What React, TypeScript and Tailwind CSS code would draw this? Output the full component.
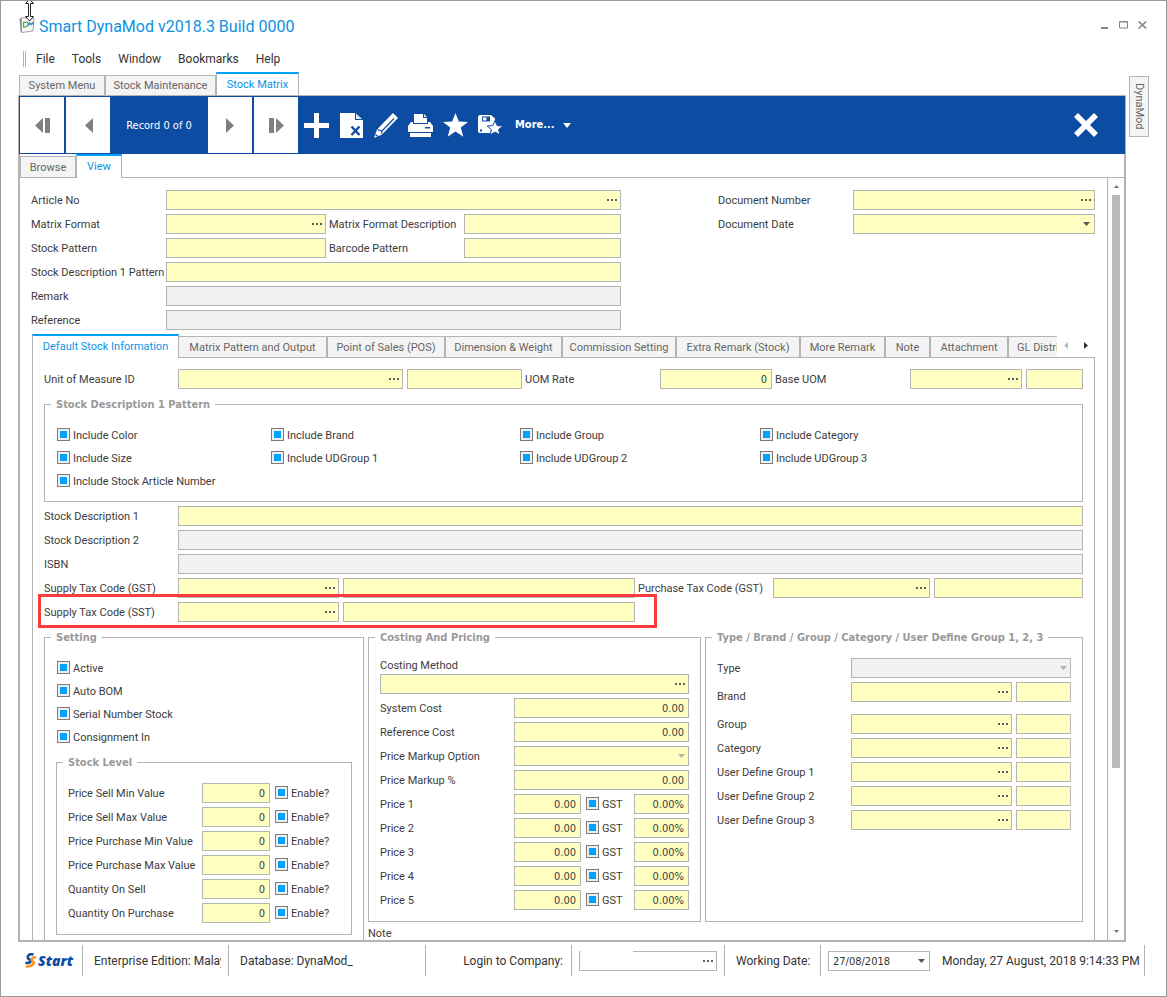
import React, { useId, useState } from 'react';

const LINE = 'border-[#b4b4b4]';
const YELLOW = 'bg-[#ffffc1]';
const GRAY = 'bg-[#f1f1f1]';

function Dots() {
  return (
    <svg width="10" height="2" viewBox="0 0 10 2" fill="#5f5f5f" aria-hidden="true">
      <rect width="2" height="2" />
      <rect x="4" width="2" height="2" />
      <rect x="8" width="2" height="2" />
    </svg>
  );
}

function Caret({ muted = false }: { muted?: boolean }) {
  return (
    <svg width="7" height="4" viewBox="0 0 7 4" fill={muted ? '#b4b4a4' : '#555'} aria-hidden="true">
      <path d="M0 0h7L3.5 4z" />
    </svg>
  );
}

type BoxProps = {
  id?: string;
  label?: string;
  kind?: 'text' | 'lookup' | 'date';
  value?: string;
  fill?: string;
  right?: boolean;
  className?: string;
};

function Box({ id, label, kind = 'text', value = '', fill = YELLOW, right = false, className = '' }: BoxProps) {
  const [text, setText] = useState(value);
  return (
    <div className={`flex h-5 min-w-0 border ${LINE} ${fill} ${className}`}>
      <input
        id={id}
        aria-label={label}
        value={text}
        onChange={(e) => setText(e.target.value)}
        className={`w-full min-w-0 flex-1 bg-transparent px-1 pt-[2px] font-['DejaVu_Sans_Condensed','Noto_Sans',sans-serif] outline-none ${right ? 'text-right' : ''}`}
      />
      {kind !== 'text' && (
        <button type="button" aria-label="Open" className="flex w-4 shrink-0 items-center justify-center">
          {kind === 'lookup' ? <Dots /> : <Caret />}
        </button>
      )}
    </div>
  );
}

function Drop({ id, fill, className = '' }: { id: string; fill: string; className?: string }) {
  return (
    <div className={`relative h-5 min-w-0 border ${LINE} ${fill} ${className}`}>
      <select id={id} className="h-full w-full appearance-none bg-transparent px-1 outline-none">
        <option value=""></option>
      </select>
      <span className="pointer-events-none absolute inset-y-0 right-[3px] flex items-center">
        <Caret muted />
      </span>
    </div>
  );
}

function Check({ label, className = '' }: { label: string; className?: string }) {
  return (
    <label className={`flex items-center gap-[3px] whitespace-nowrap ${className}`}>
      <input
        type="checkbox"
        defaultChecked
        className="size-[13px] shrink-0 appearance-none border border-[#7a7a7a] bg-white shadow-[inset_0_0_0_2px_#f0f0f0] checked:bg-[#00a2ff]"
      />
      <span className="pt-[2px]">{label}</span>
    </label>
  );
}

function Label({ htmlFor, children, className = '' }: { htmlFor: string; children: React.ReactNode; className?: string }) {
  return (
    <label htmlFor={htmlFor} className={`pt-[2px] whitespace-nowrap ${className}`}>
      {children}
    </label>
  );
}

function Group({ title, className = '', children }: { title: string; className?: string; children: React.ReactNode }) {
  return (
    <fieldset className={`min-w-0 border ${LINE} ${className}`}>
      <legend className="ml-[6px] px-[5px] font-['DejaVu_Sans_Condensed','Noto_Sans',sans-serif] text-[11px] leading-[15px] font-bold text-[#999]">{title}</legend>
      {children}
    </fieldset>
  );
}

function WideRow({ label, fill }: { label: string; fill: string }) {
  const id = useId();
  return (
    <div className="grid grid-cols-[134px_minmax(0,1fr)] items-center">
      <Label htmlFor={id}>{label}</Label>
      <Box id={id} fill={fill} />
    </div>
  );
}

function HeaderFields() {
  const id = useId();
  return (
    <div className="grid grid-cols-[135px_minmax(0,455fr)_97px_135px_minmax(0,242fr)] items-center gap-y-1">
      <Label htmlFor={id + 'article'}>Article No</Label>
      <Box id={id + 'article'} kind="lookup" />
      <Label htmlFor={id + 'docno'} className="col-start-4">Document Number</Label>
      <Box id={id + 'docno'} kind="lookup" />

      <Label htmlFor={id + 'format'}>Matrix Format</Label>
      <div className="grid grid-cols-[minmax(0,160fr)_138px_minmax(0,157fr)] items-center">
        <Box id={id + 'format'} kind="lookup" />
        <Label htmlFor={id + 'formatdesc'} className="pl-[3px]">Matrix Format Description</Label>
        <Box id={id + 'formatdesc'} />
      </div>
      <Label htmlFor={id + 'docdate'} className="col-start-4">Document Date</Label>
      <Box id={id + 'docdate'} kind="date" />

      <Label htmlFor={id + 'pattern'} className="col-start-1">Stock Pattern</Label>
      <div className="grid grid-cols-[minmax(0,160fr)_138px_minmax(0,157fr)] items-center">
        <Box id={id + 'pattern'} />
        <Label htmlFor={id + 'barcode'} className="pl-[3px]">Barcode Pattern</Label>
        <Box id={id + 'barcode'} />
      </div>

      <Label htmlFor={id + 'descpattern'} className="col-start-1">Stock Description 1 Pattern</Label>
      <Box id={id + 'descpattern'} />
      <Label htmlFor={id + 'remark'} className="col-start-1">Remark</Label>
      <Box id={id + 'remark'} fill={GRAY} />
      <Label htmlFor={id + 'ref'} className="col-start-1">Reference</Label>
      <Box id={id + 'ref'} fill={GRAY} />
    </div>
  );
}

const innerTabs: [string, string][] = [
  ['Matrix Pattern and Output', 'w-[149px]'],
  ['Point of Sales (POS)', 'w-[118px]'],
  ['Dimension & Weight', 'w-[117px]'],
  ['Commission Setting', 'w-[114px]'],
  ['Extra Remark (Stock)', 'w-[124px]'],
  ['More Remark', 'w-[85px]'],
  ['Note', 'w-[45px]'],
  ['Attachment', 'w-[78px]'],
];

function InnerTabs() {
  return (
    <div className="flex h-6 items-end">
      <div className="flex min-w-0 flex-1 items-end overflow-hidden" role="tablist">
        <button role="tab" aria-selected="true" className="h-6 w-[147px] shrink-0 border-x border-t-2 border-x-[#b4b4b4] border-t-[#00a2ff] bg-white text-[#0c93e4]">
          Default Stock Information
        </button>
        {innerTabs.map(([name, width]) => (
          <button
            key={name}
            role="tab"
            aria-selected="false"
            className={`h-[22px] shrink-0 border-t border-r-2 border-b ${LINE} bg-[#f4f4f4] pt-[2px] whitespace-nowrap text-[#666] ${width}`}
          >
            {name}
          </button>
        ))}
        <button role="tab" aria-selected="false" className={`h-[22px] min-w-0 flex-1 overflow-hidden border-y ${LINE} bg-[#f4f4f4] pt-[2px] pl-2 text-left whitespace-nowrap text-[#666]`}>
          GL Distri
        </button>
      </div>
      <div className={`flex h-6 w-[38px] shrink-0 items-center gap-4 border-b ${LINE} pl-[7px]`}>
        <button aria-label="Scroll tabs left">
          <svg width="4" height="7" viewBox="0 0 4 7" fill="#bbb"><path d="M4 0v7L0 3.5z" /></svg>
        </button>
        <button aria-label="Scroll tabs right">
          <svg width="4" height="7" viewBox="0 0 4 7" fill="#333"><path d="M0 0v7l4-3.5z" /></svg>
        </button>
      </div>
    </div>
  );
}

const includes = [
  'Include Color', 'Include Brand', 'Include Group', 'Include Category',
  'Include Size', 'Include UDGroup 1', 'Include UDGroup 2', 'Include UDGroup 3',
  'Include Stock Article Number',
];

const stockLevels = [
  'Price Sell Min Value', 'Price Sell Max Value', 'Price Purchase Min Value',
  'Price Purchase Max Value', 'Quantity On Sell', 'Quantity On Purchase',
];

function Setting() {
  const id = useId();
  return (
    <Group title="Setting" className="pb-3">
      <div className="flex flex-col pt-[11px] pl-3">
        {['Active', 'Auto BOM', 'Serial Number Stock', 'Consignment In'].map((s) => (
          <div key={s} className="flex h-[23px] items-center"><Check label={s} /></div>
        ))}
      </div>
      <Group title="Stock Level" className="mx-[11px] mt-[7px]">
        <div className="flex flex-col gap-1 pt-[13px] pb-[11px] pl-[11px]">
          {stockLevels.map((s, i) => (
            <div key={s} className="flex items-center">
              <Label htmlFor={id + i} className="w-[134px] shrink-0">{s}</Label>
              <Box id={id + i} value="0" right className="mr-[5px] w-[68px]" />
              <Check label="Enable?" className="h-5 pb-px" />
            </div>
          ))}
        </div>
      </Group>
    </Group>
  );
}

function Costing() {
  const id = useId();
  return (
    <Group title="Costing And Pricing">
      <div className="flex flex-col px-[11px] pt-[11px]">
        <Label htmlFor={id + 'method'}>Costing Method</Label>
        <Box id={id + 'method'} kind="lookup" />
      </div>
      <div className="mt-1 grid grid-cols-[134px_minmax(0,1fr)] items-center gap-y-1 px-[11px] pb-[11px]">
        <Label htmlFor={id + 'sys'}>System Cost</Label>
        <Box id={id + 'sys'} value="0.00" right />
        <Label htmlFor={id + 'refc'}>Reference Cost</Label>
        <Box id={id + 'refc'} value="0.00" right />
        <Label htmlFor={id + 'opt'}>Price Markup Option</Label>
        <Drop id={id + 'opt'} fill={YELLOW} />
        <Label htmlFor={id + 'pct'}>Price Markup %</Label>
        <Box id={id + 'pct'} value="0.00" right />
        {[1, 2, 3, 4, 5].map((n) => (
          <React.Fragment key={n}>
            <Label htmlFor={id + n}>Price {n}</Label>
            <div className="grid grid-cols-[minmax(0,67fr)_53px_minmax(0,55fr)] items-center">
              <Box id={id + n} value="0.00" right />
              <Check label="GST" className="h-5 pb-px pl-[5px]" />
              <Box label={`GST rate for price ${n}`} value="0.00%" right />
            </div>
          </React.Fragment>
        ))}
      </div>
    </Group>
  );
}

function Categories() {
  const id = useId();
  return (
    <Group title="Type / Brand / Group / Category / User Define Group 1, 2, 3">
      <div className="grid grid-cols-[134px_minmax(0,1fr)] items-center gap-y-1 px-[11px] pt-[13px]">
        <Label htmlFor={id + 'type'}>Type</Label>
        <Drop id={id + 'type'} fill={GRAY} />
        {['Brand', 'Group', 'Category', 'User Define Group 1', 'User Define Group 2', 'User Define Group 3'].map((s) => (
          <React.Fragment key={s}>
            <Label htmlFor={id + s}>{s}</Label>
            <div className={`grid grid-cols-[minmax(0,161fr)_minmax(0,55fr)] items-start gap-x-1 ${s === 'Brand' ? 'h-7' : 'h-5'}`}>
              <Box id={id + s} kind="lookup" />
              <Box label={`${s} name`} />
            </div>
          </React.Fragment>
        ))}
      </div>
    </Group>
  );
}

const TAX = 'grid grid-cols-[134px_minmax(0,161fr)_4px_minmax(0,292fr)_138px_minmax(0,157fr)_4px_minmax(0,149fr)] items-center';

function StockInformation() {
  const id = useId();
  return (
    <div className={`flex-1 border-x ${LINE} px-[11px] pt-[11px]`}>
      <div className="grid grid-cols-[134px_minmax(0,225fr)_4px_minmax(0,115fr)_138px_minmax(0,112fr)_138px_minmax(0,112fr)_4px_minmax(0,57fr)] items-center">
        <Label htmlFor={id + 'uom'}>Unit of Measure ID</Label>
        <Box id={id + 'uom'} kind="lookup" />
        <Box label="Unit of measure name" className="col-start-4" />
        <Label htmlFor={id + 'rate'} className="pl-[3px]">UOM Rate</Label>
        <Box id={id + 'rate'} value="0" right />
        <Label htmlFor={id + 'base'} className="pl-[3px]">Base UOM</Label>
        <Box id={id + 'base'} kind="lookup" />
        <Box label="Base UOM name" className="col-start-10" />
      </div>

      <Group title="Stock Description 1 Pattern" className="mt-2 mb-1">
        <div className="grid grid-cols-[214fr_249fr_240fr_310fr] px-3 pt-[11px] pb-[9px]">
          {includes.map((s) => (
            <div key={s} className="flex h-[23px] items-center"><Check label={s} /></div>
          ))}
        </div>
      </Group>

      <div className="flex flex-col gap-1">
        <WideRow label="Stock Description 1" fill={YELLOW} />
        <WideRow label="Stock Description 2" fill={GRAY} />
        <WideRow label="ISBN" fill={GRAY} />
        <div className={TAX}>
          <Label htmlFor={id + 'gst'}>Supply Tax Code (GST)</Label>
          <Box id={id + 'gst'} kind="lookup" />
          <Box label="Supply tax description (GST)" className="col-start-4" />
          <Label htmlFor={id + 'pgst'} className="pl-[3px]">Purchase Tax Code (GST)</Label>
          <Box id={id + 'pgst'} kind="lookup" />
          <Box label="Purchase tax description (GST)" className="col-start-8" />
        </div>
        <div className={TAX}>
          <Label htmlFor={id + 'sst'} className="col-start-1 row-start-1">Supply Tax Code (SST)</Label>
          <Box id={id + 'sst'} kind="lookup" className="col-start-2 row-start-1" />
          <Box label="Supply tax description (SST)" className="col-start-4 row-start-1" />
          <div className="pointer-events-none relative col-span-4 col-start-1 row-start-1 h-5">
            <div className="absolute -top-[8px] -right-[22px] -bottom-[6px] -left-[6px] border-3 border-[#fb3c3c]" />
          </div>
        </div>
      </div>

      <div className="mt-2 grid grid-cols-[minmax(0,320fr)_minmax(0,715fr)] gap-x-1">
        <Setting />
        <div>
          <div className="grid grid-cols-[minmax(0,333fr)_minmax(0,378fr)] gap-x-1">
            <Costing />
            <Categories />
          </div>
          <div className="pt-1">Note</div>
        </div>
      </div>
    </div>
  );
}

function Scrollbar() {
  return (
    <div className={`flex w-[17px] shrink-0 flex-col items-center border-l ${LINE} py-[7px]`}>
      <svg width="5" height="3" viewBox="0 0 5 3" fill="#777"><path d="M0 3h5L2.5 0z" /></svg>
      <div className="mt-[7px] mb-[4px] flex flex-1 flex-col">
        <div className="w-2 flex-[573] bg-[#b9b9b9]" />
        <div className="flex-[158]" />
      </div>
      <svg width="5" height="3" viewBox="0 0 5 3" fill="#777"><path d="M0 0h5L2.5 3z" /></svg>
    </div>
  );
}

function NavButton({ label, d }: { label: string; d: string }) {
  return (
    <button aria-label={label} className="flex w-11 items-center justify-center bg-white">
      <svg width="16" height="15" viewBox="0 0 16 15" fill="#808080"><path d={d} /></svg>
    </button>
  );
}

function Toolbar() {
  return (
    <div className={`-mx-px flex h-[59px] shrink-0 items-stretch border-t ${LINE} bg-[#0c4ca3] text-white`}>
      <div className="flex gap-[2px] py-px pl-px">
        <NavButton label="First record" d="M9 0v15L1 7.5zM11 0h5v15h-5z" />
        <NavButton label="Previous record" d="M13 0v15L5 7.5z" />
      </div>
      <div className="flex w-[98px] items-center justify-center pt-px font-['DejaVu_Sans_Condensed','Noto_Sans',sans-serif]">Record 0 of 0</div>
      <div className="flex gap-[2px] py-px">
        <NavButton label="Next record" d="M4 0v15l8-7.5z" />
        <NavButton label="Last record" d="M1 0h5v15H1zM8 0v15l8-7.5z" />
      </div>
      <div className="flex flex-1 items-center pl-[6px]">
        <button aria-label="New" className="mr-[11px]">
          <svg width="25" height="25" viewBox="0 0 25 25" fill="#fff"><path d="M10 0h5v10h10v5H15v10h-5V15H0v-5h10z" /></svg>
        </button>
        <button aria-label="Delete" className="mr-[11px]">
          <svg width="23" height="25" viewBox="0 0 23 25">
            <path d="M0 0h15v7h8v18H0z" fill="#fff" />
            <path d="M16 .5v5.5h6z" fill="#dfe8f4" />
            <path d="M11.500 13.500l8 8.500M19.500 13.500l-8 8.500" stroke="#0c4ca3" strokeWidth="2.400" />
          </svg>
        </button>
        <button aria-label="Edit" className="mr-[10px]">
          <svg width="24" height="25" viewBox="0 0 24 25">
            <path d="M19 0l5 5L8 21.500 0 25l3-8.500z" fill="#fff" />
            <path d="M20 5.500L7.500 18.500M3.500 16.500l4 1.500.5 3M1.500 21.500l2.500 2" stroke="#0c4ca3" strokeWidth="1.100" fill="none" />
          </svg>
        </button>
        <button aria-label="Print" className="mr-[10px]">
          <svg width="25" height="25" viewBox="0 0 25 25" fill="#fff">
            <path d="M6 1h9v4h4v5H6z" />
            <path d="M16 1l3 3h-3z" fill="#dfe8f4" />
            <path d="M3 9h2v2h15V9h2l3 4v6H0v-6z" />
            <path d="M2 20h21v4H2z" />
            <path d="M17 14h5v1.500h-5z" fill="#0c4ca3" />
          </svg>
        </button>
        <button aria-label="Bookmark" className="mr-[10px]">
          <svg width="25" height="24" viewBox="0 0 25 24" fill="#fff"><path d="M12.500 0l3.300 8.500 9.200.4-7.200 5.700 2.500 9.200-7.800-5.200-7.800 5.200 2.500-9.200L0 8.900l9.200-.4z" /></svg>
        </button>
        <button aria-label="Save bookmark" className="mr-3">
          <svg width="25" height="20" viewBox="0 0 25 20">
            <path d="M1.500 0H13l4 3.500V18H1.500L0 16.500v-15z" fill="#fff" />
            <path d="M4 1.500h8v5H4z" fill="#0c4ca3" />
            <path d="M5 2.500h3.500v3H5z" fill="#fff" />
            <rect x="2" y="14.500" width="2" height="2" fill="#0c4ca3" />
            <path d="M17 5.500l2.200 5.100 5.600.4-4.200 3.600 1.400 5.400-5-3-5 3 1.400-5.400L9.200 11l5.600-.4z" fill="#fff" stroke="#0c4ca3" strokeWidth="1" />
          </svg>
        </button>
        <button className="flex items-center gap-2 font-['DejaVu_Sans_Condensed','Noto_Sans',sans-serif] font-bold">
          More...
          <svg width="8" height="5" viewBox="0 0 8 5" fill="#fff"><path d="M0 0h8L4 5z" /></svg>
        </button>
      </div>
      <button aria-label="Close record" className="mr-[27px] flex items-center">
        <svg width="24" height="24" viewBox="0 0 24 24" stroke="#fff" strokeWidth="5.600"><path d="M2 2l20 20M22 2L2 22" /></svg>
      </button>
    </div>
  );
}

function TitleBar() {
  return (
    <header className="flex h-12 shrink-0 items-center pr-[19px] pl-[18px]">
      <svg width="16" height="18" viewBox="0 0 16 18" aria-hidden="true">
        <path d="M3 1.500l12 1-1 12.500-11.500 1.500L1 3z" fill="#f6f6f6" stroke="#a8a8a8" />
        <path d="M.5 2.500L3 1.500v15L1.500 15.500z" fill="#9a9a9a" />
        <path d="M4.500 6.500c4-1 5 0 4.500 2s-2 2.500-4.500 2.500z" fill="none" stroke="#4cb748" strokeWidth="1.300" />
        <path d="M9.500 9.500l1-2.500 1.500 1.500L14 6.500v2" fill="none" stroke="#3c84cc" strokeWidth="1.300" />
      </svg>
      <h1 className="ml-1 flex-1 pt-1 text-[16px] text-[#0c93e4]">Smart DynaMod v2018.3 Build 0000</h1>
      <div className="flex items-center gap-[10px]">
        <button aria-label="Minimize"><svg width="8" height="8" viewBox="0 0 8 8"><path d="M0 6h7v2H0z" fill="#888" /></svg></button>
        <button aria-label="Maximize"><svg width="9" height="8" viewBox="0 0 9 8"><path d="M.5 .5h8v6.500h-8zM0 1h9" fill="none" stroke="#888" /></svg></button>
        <button aria-label="Close"><svg width="9" height="8" viewBox="0 0 9 8"><path d="M.7 .5l7.500 7M8.200 .5l-7.500 7" stroke="#888" strokeWidth="1.700" /></svg></button>
      </div>
    </header>
  );
}

function Menu() {
  return (
    <nav className="flex h-[21px] shrink-0 items-center pb-px pl-[22px] text-[12px] text-[#333]">
      <span className="mr-[10px] h-4 w-[3px] border-x border-[#b4b4b4]" />
      <div className="flex gap-[17px]">
        {['File', 'Tools', 'Window', 'Bookmarks', 'Help'].map((m) => (
          <button key={m}>{m}</button>
        ))}
      </div>
    </nav>
  );
}

function Separator() {
  return <span className="h-[31px] w-px shrink-0 bg-[#b4b4b4]" />;
}

function StatusBar() {
  const id = useId();
  return (
    <footer className="flex h-[39px] shrink-0 items-center pb-[2px] pl-6 text-[12px] text-[#333]">
      <div className="flex w-[57px] items-center">
        <svg width="12" height="15" viewBox="0 0 12 15" aria-hidden="true">
          <path d="M8.500 1.500C3 0 1 5 4.500 6.500S4 11 .5 9.500" fill="none" stroke="#0c4ca3" strokeWidth="2.600" />
          <path d="M11 4.500C7 3.500 5.500 7 8 8.500S7 14 1 13.500" fill="none" stroke="#f7931e" strokeWidth="2.600" />
        </svg>
        <span className="ml-px font-['Open_Sans',sans-serif] text-[14px] leading-4 font-extrabold text-[#0c4ca3] italic">Start</span>
      </div>
      <Separator />
      <div className="ml-[11px] w-[127px] overflow-hidden whitespace-nowrap">Enterprise Edition: Malay</div>
      <div className="w-[7px]" />
      <Separator />
      <div className="w-[196px] pl-[11px] whitespace-nowrap">Database: DynaMod_</div>
      <Separator />
      <div className="min-w-0 flex-1" />
      <label htmlFor={id + 'company'} className="pr-2 whitespace-nowrap">Login to Company:</label>
      <Separator />
      <div className="relative mx-[7px] w-[138px] text-[11px]">
        <Box id={id + 'company'} kind="lookup" fill="bg-white" />
        <span className="absolute top-0 left-px h-px w-[53px] bg-white" />
      </div>
      <Separator />
      <label htmlFor={id + 'working'} className="w-[95px] pl-[11px] whitespace-nowrap">Working Date:</label>
      <Separator />
      <Box id={id + 'working'} kind="date" value="27/08/2018" fill="bg-white" className="mr-3 ml-[7px] w-[102px] text-[11px]" />
      <div className="w-[202px] whitespace-nowrap">Monday, 27 August, 2018 9:14:33 PM</div>
      <Separator />
      <div className="w-[21px]" />
    </footer>
  );
}

export default function App() {
  const inactive = `border-t border-l border-r ${LINE} bg-[#f4f4f4] text-[#666]`;
  const active = 'border-x border-t-2 border-x-[#b4b4b4] border-t-[#00a2ff] bg-white text-[#0c93e4]';
  return (
    <div className="relative flex h-screen flex-col overflow-hidden border border-[#999] bg-white pb-[15px] font-['Roboto','Liberation_Sans',sans-serif] text-[11px] leading-4 text-[#3c3c3c]">
      <svg className="absolute top-0 left-[23px]" width="11" height="21" viewBox="0 0 11 21" aria-hidden="true">
        <path d="M5.500 -2l4 4.500h-3v13h3l-4 4.500-4-4.500h3v-13h-3z" fill="#fff" stroke="#222" />
      </svg>
      <TitleBar />
      <Menu />
      <div className="flex min-h-0 flex-1">
        <main className="ml-[17px] flex min-w-0 flex-1 flex-col">
          <div className="flex h-[25px] shrink-0 items-end pl-px" role="tablist">
            <button role="tab" aria-selected="false" className={`h-5 w-[86px] ${inactive}`}>System Menu</button>
            <button role="tab" aria-selected="false" className={`h-5 w-[111px] ${inactive}`}>Stock Maintenance</button>
            <button role="tab" aria-selected="true" className={`h-[23px] w-[83px] ${active}`}>Stock Matrix</button>
          </div>
          <div className={`flex min-h-0 flex-1 flex-col border-r-2 border-b-2 border-l-2 ${LINE}`}>
            <Toolbar />
            <div className="flex h-6 shrink-0" role="tablist">
              <div className={`flex items-end border-b ${LINE}`}>
                <button role="tab" aria-selected="false" className={`h-[21px] w-14 pt-px ${inactive}`}>Browse</button>
              </div>
              <button role="tab" aria-selected="true" className={`w-[46px] ${active}`}>View</button>
              <div className={`flex-1 border-b ${LINE}`} />
            </div>
            <div className="flex min-h-0 flex-1">
              <div className="flex min-w-0 flex-1 flex-col overflow-hidden pt-3 pr-3 pl-[11px]">
                <HeaderFields />
                <div className="mt-1 ml-px flex shrink-0 flex-col">
                  <InnerTabs />
                  <StockInformation />
                </div>
              </div>
              <Scrollbar />
            </div>
          </div>
        </main>
        <aside className="w-10 shrink-0 pt-[6px] pl-[3px]">
          <button className={`h-[61px] w-5 border ${LINE} bg-[#f4f4f4] text-[#666] [writing-mode:vertical-rl]`}>DynaMod</button>
        </aside>
      </div>
      <StatusBar />
    </div>
  );
}
